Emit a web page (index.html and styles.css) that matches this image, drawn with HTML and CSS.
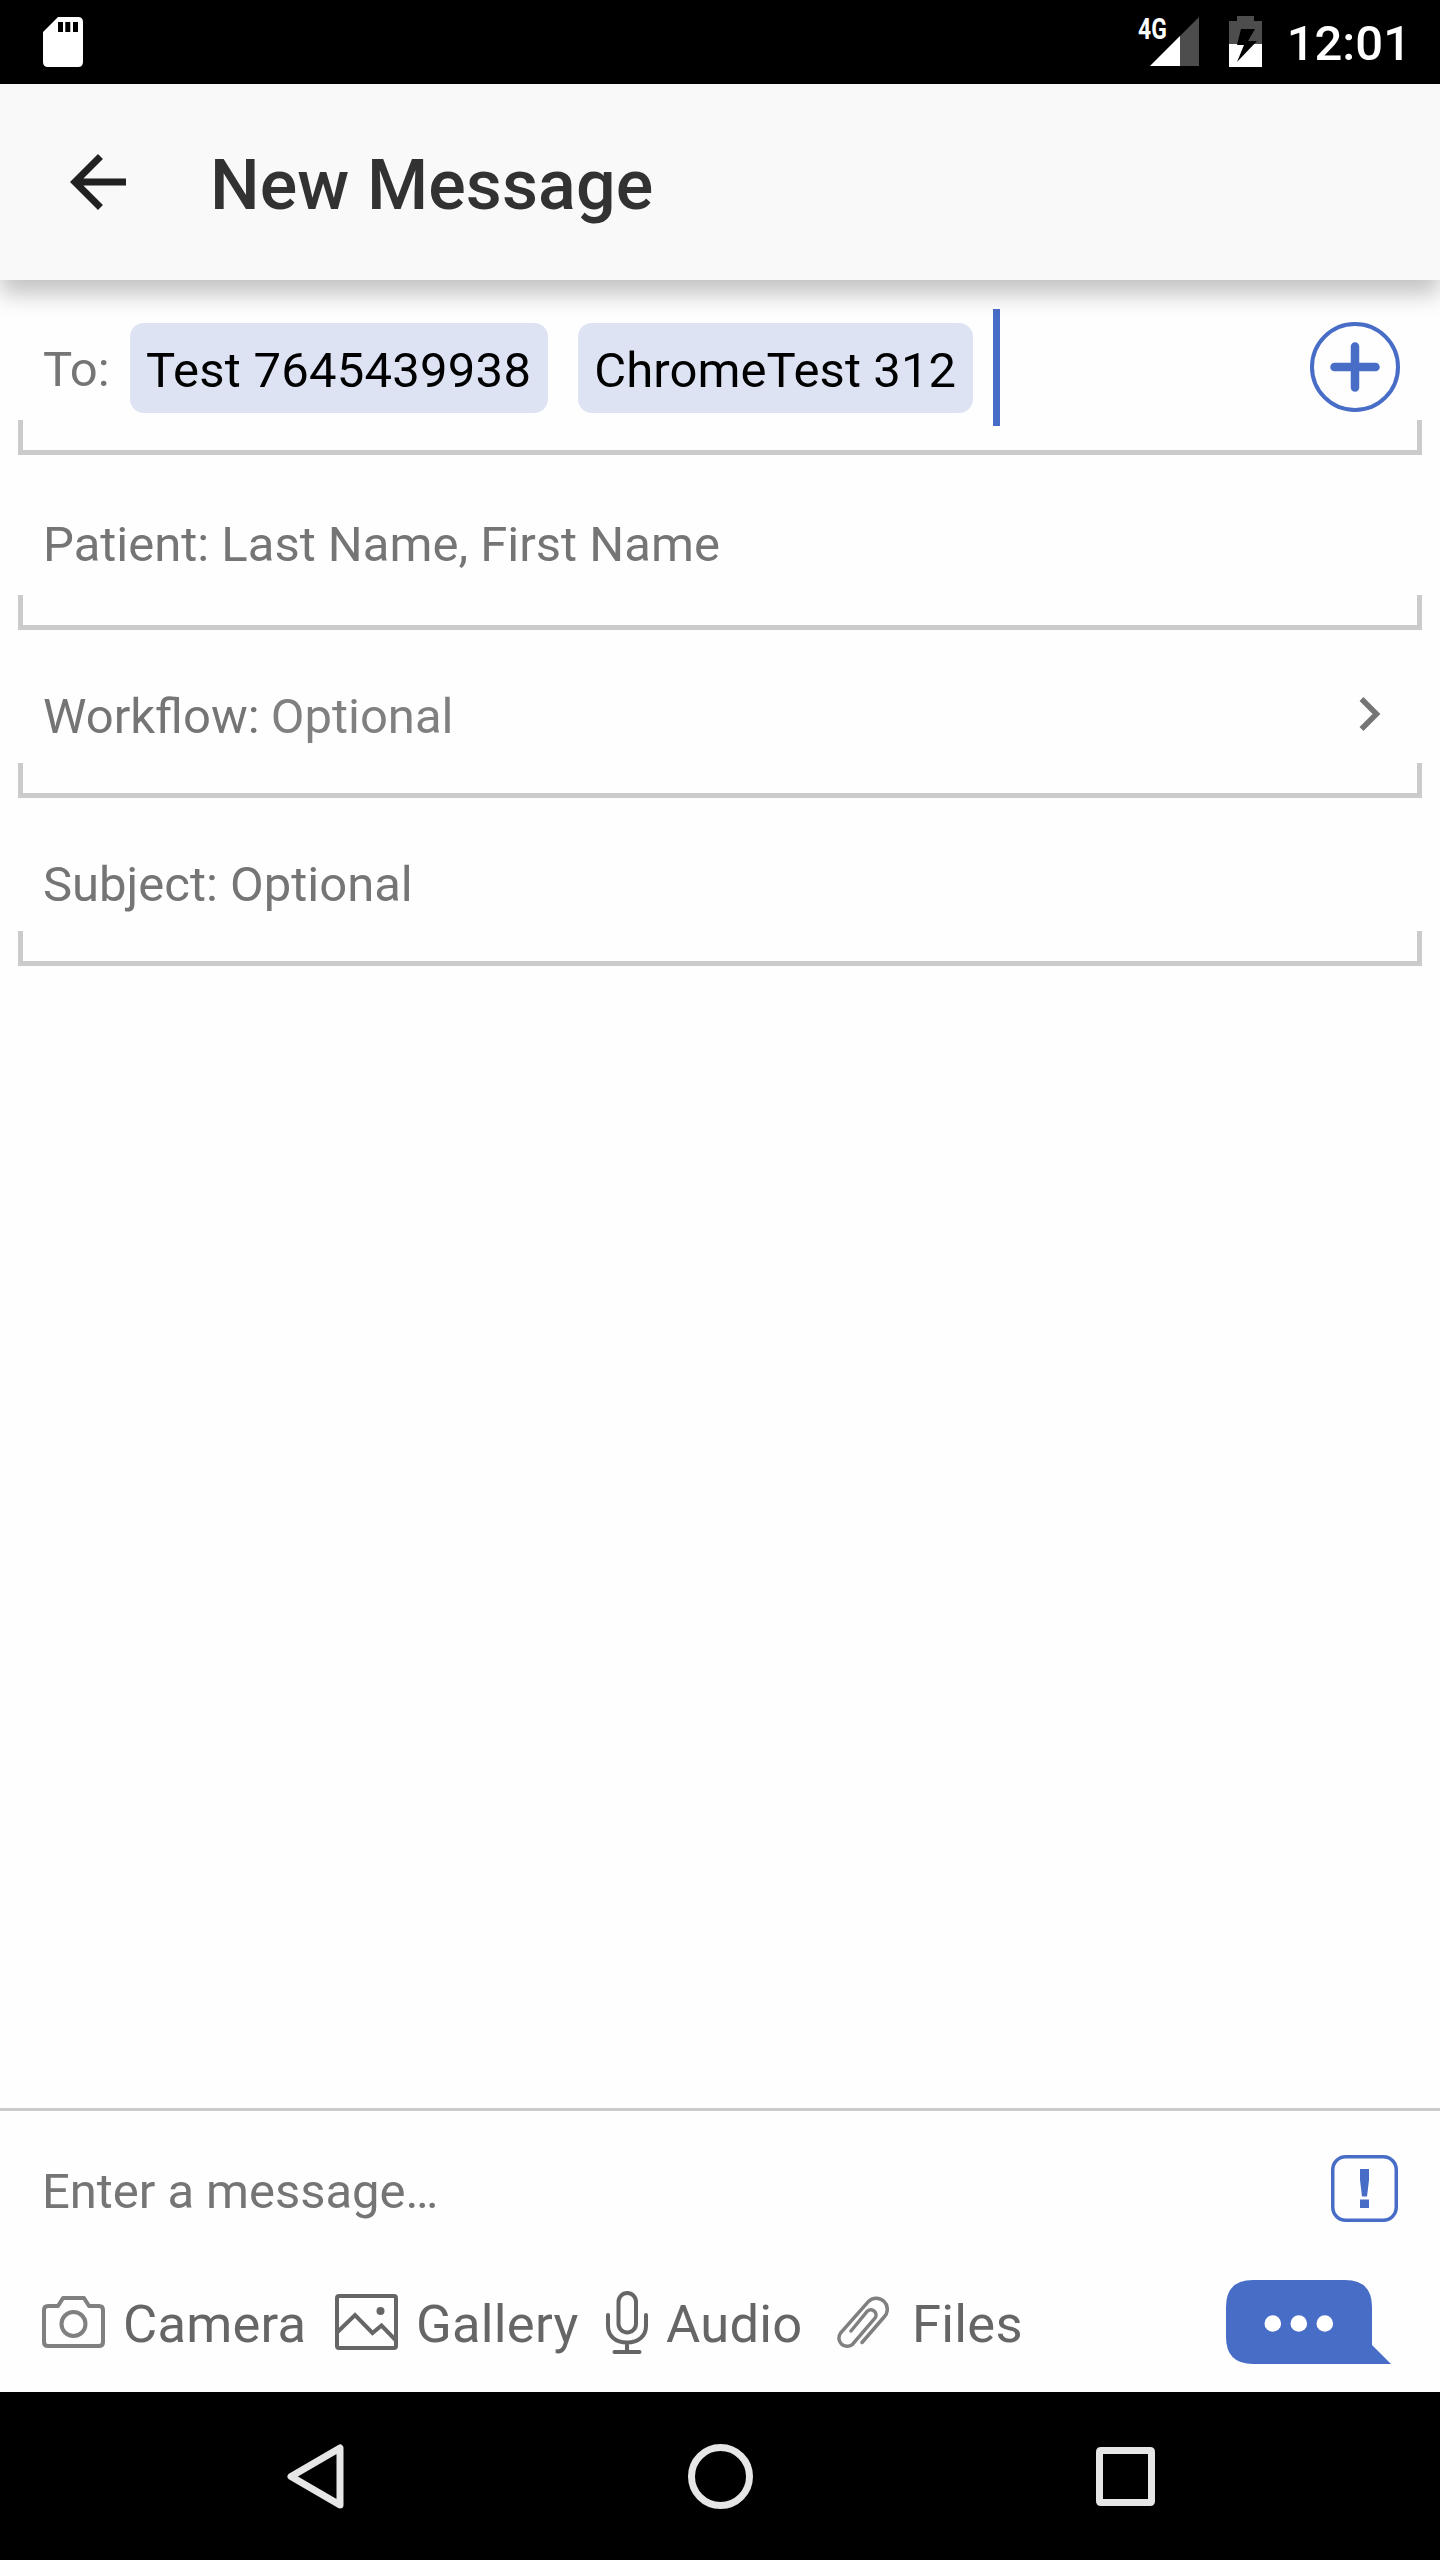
FILE: index.html
```html
<!DOCTYPE html>
<html lang="en">
<head>
<meta charset="utf-8">
<title>New Message</title>
<link rel="stylesheet" href="styles.css">
</head>
<body>
<div class="screen">
  <div class="status-bar">
    <svg class="sd-icon" width="40" height="50" viewBox="0 0 40 50"><path fill="#fff" fill-rule="evenodd" d="M15 0H35Q40 0 40 5V45Q40 50 35 50H5Q0 50 0 45V15ZM15 5V15H20V5ZM22.300 5V15H27.300V5ZM30 5V15H35V5Z"/></svg>
    <div class="status-right">
      <span class="network">4G</span>
      <svg class="signal-icon" width="49" height="49" viewBox="0 0 49 49"><path fill="#4d4d4d" d="M49 0V49H0Z"/><path fill="#fff" d="M30 19V49H0Z"/></svg>
      <svg class="battery-icon" width="33" height="51" viewBox="0 0 33 51"><path fill="#4d4d4d" d="M8 0H25V5H33V28H0V5H8Z"/><path fill="#fff" d="M0 28H33V51H0Z"/><path fill="#000" d="M12 13H26L19 25H28L8 46L15 29H8Z"/></svg>
      <span class="clock">12:01</span>
    </div>
  </div>

  <header class="app-bar">
    <svg class="back-icon" width="56" height="56" viewBox="0 0 56 56"><path fill="#212121" d="M56 24.500H13.400L32.960 4.930L28 0L0 28L28 56L32.930 51.070L13.400 31.500H56Z"/></svg>
    <h1 class="title">New Message</h1>
  </header>

  <main class="form">
    <div class="field field-to">
      <div class="field-row">
        <span class="label">To:</span>
        <span class="chip">Test 7645439938</span>
        <span class="chip chip-tight">ChromeTest 312</span>
        <span class="caret"></span>
        <svg class="add-icon" width="92" height="92" viewBox="0 0 92 92" fill="none" stroke="#486dc7"><circle cx="46" cy="46" r="43" stroke-width="4"/><path stroke-width="8.500" stroke-linecap="round" d="M46 25.500V66.500M25.500 46H66.500"/></svg>
      </div>
      <div class="bracket"></div>
    </div>
    <div class="field field-patient">
      <div class="field-row"><span class="label">Patient: Last Name, First Name</span></div>
      <div class="bracket"></div>
    </div>
    <div class="field field-workflow">
      <div class="field-row">
        <span class="label">Workflow: <span class="optional">Optional</span></span>
        <svg class="chevron" width="22" height="36" viewBox="0 0 22 36" fill="none" stroke="#757575" stroke-width="5.500"><path d="M2.500 3L17.500 18L2.500 33"/></svg>
      </div>
      <div class="bracket"></div>
    </div>
    <div class="field field-subject">
      <div class="field-row"><span class="label">Subject: Optional</span></div>
      <div class="bracket"></div>
    </div>
  </main>

  <section class="composer">
    <div class="message-row">
      <span class="label">Enter a message…</span>
      <svg class="urgent" width="67" height="67" viewBox="0 0 67 67"><rect x="1.750" y="1.750" width="63.500" height="63.500" rx="13" fill="none" stroke="#486dc7" stroke-width="3.500"/><path fill="#486dc7" d="M29 14H38V25L36 41.500H31L29 25ZM29 44.500H38V53H29Z"/></svg>
    </div>
    <div class="actions">
      <div class="action camera">
        <svg width="63" height="52" viewBox="0 0 63 52" fill="none" stroke="#808080" stroke-width="4"><path stroke-linejoin="round" d="M6 10H16L21 2H42L47 10H57Q61 10 61 14V46Q61 50 57 50H6Q2 50 2 46V14Q2 10 6 10Z"/><circle cx="31.500" cy="28" r="12"/></svg>
        <span>Camera</span>
      </div>
      <div class="action gallery">
        <svg width="63" height="56" viewBox="0 0 63 56" fill="none" stroke="#666" stroke-width="4"><rect x="2" y="2" width="59" height="52" rx="2"/><path d="M2 38.500L20 21L37.500 39L46.500 31.500L61 46.500"/><circle cx="45.500" cy="17" r="4" fill="#666" stroke="none"/></svg>
        <span>Gallery</span>
      </div>
      <div class="action audio">
        <svg width="42" height="63" viewBox="0 0 42 63" fill="none" stroke="#666" stroke-width="4" stroke-linecap="round"><rect x="12.500" y="2" width="17.500" height="39.500" rx="8.750"/><path d="M2 24V35C2 45 9.500 51.500 21 51.500S40 45 40 35V24M21 52V61M8.500 61H33.500"/></svg>
        <span>Audio</span>
      </div>
      <div class="action files">
        <svg width="53" height="53" viewBox="0 0 53 53" fill="none" stroke="#808080" stroke-width="3.500" stroke-linecap="round"><path d="M26 46.500L48.300 20.800A10.900 10.900 0 0 0 32.300 5.600L4.500 37.200A8.300 8.300 0 0 0 16.200 48.700L39.200 21.800A5.200 5.200 0 0 0 31.500 15L15 35"/></svg>
        <span>Files</span>
      </div>
      <svg class="send" width="165" height="84" viewBox="0 0 165 84"><path fill="#486dc7" d="M27 0H119Q146 0 146 27V65L165 84H27Q0 84 0 57V27Q0 0 27 0Z"/><g fill="#fff"><circle cx="46.800" cy="43.500" r="8.300"/><circle cx="72.800" cy="43.500" r="8.300"/><circle cx="98.800" cy="43.500" r="8.300"/></g></svg>
    </div>
  </section>

  <nav class="nav-bar">
    <svg width="57" height="65" viewBox="0 0 57 65"><path fill="none" stroke="#e6e6e6" stroke-width="7" stroke-linejoin="round" d="M4 32.500L53 4V61Z"/></svg>
    <svg width="65" height="65" viewBox="0 0 65 65"><circle cx="32.500" cy="32.500" r="29" fill="none" stroke="#e6e6e6" stroke-width="7"/></svg>
    <svg width="59" height="59" viewBox="0 0 59 59"><path fill="#e6e6e6" fill-rule="evenodd" d="M5 0H54Q59 0 59 5V54Q59 59 54 59H5Q0 59 0 54V5Q0 0 5 0ZM7 7V52H52V7Z"/></svg>
  </nav>
</div>
</body>
</html>
```

FILE: styles.css
```css
* { box-sizing: border-box; }

body {
  margin: 0;
  font-family: Roboto, "Liberation Sans", sans-serif;
  font-size: 49px;
  color: #757575;
  background: #fefefe;
}

svg { display: block; flex: none; }
span { white-space: nowrap; }

.screen {
  display: flex;
  flex-direction: column;
  width: 1440px;
  height: 2560px;
}

.status-bar {
  display: flex;
  justify-content: space-between;
  align-items: flex-start;
  height: 84px;
  padding: 0 29px 0 43px;
  background: #000;
  color: #fff;
}
.sd-icon { margin-top: 17px; }
.status-right { display: flex; align-items: flex-start; }
.network {
  width: 30px;
  margin: 11px -18px 0 0;
  font-size: 29px;
  font-weight: 700;
  line-height: 36px;
  transform: scaleX(.79);
  transform-origin: left;
}
.signal-icon { margin-top: 17px; }
.battery-icon { margin: 16px 25px 0 30px; }
.clock {
  font-weight: 500;
  line-height: 60px;
  margin-top: 14px;
}

.app-bar {
  position: relative;
  z-index: 1;
  display: flex;
  align-items: center;
  height: 196px;
  padding-left: 70px;
  background: #f9f9f9;
  box-shadow: 0 14px 22px rgba(0, 0, 0, .235);
}
.title {
  margin: 6px 0 0 84px;
  font-size: 70px;
  font-weight: 500;
  line-height: 84px;
  letter-spacing: .1px;
  color: #323232;
}

.form { flex: 1; padding: 0 18px; }
.field {
  display: flex;
  flex-direction: column;
  justify-content: space-between;
  height: 168px;
}
.field-to, .field-patient { height: 175px; }
.field-row {
  display: flex;
  align-items: center;
  height: 60px;
  margin-top: 57px;
  padding: 0 21px 0 25px;
}
.field-patient .field-row { margin-top: 60px; }
.field-to .field-row { height: 117px; margin-top: 29px; margin-bottom: -6px; }
.field-to .label { width: 87px; margin-top: 4px; }
.bracket {
  height: 35px;
  border: 5px solid #cbcbcb;
  border-top: 0;
}
.label { line-height: 60px; }
.optional { margin-left: -1px; color: #808080; }
.chip {
  height: 90px;
  margin-right: 30px;
  padding: 5px 17px 0 16px;
  border-radius: 14px;
  background: #dee3f4;
  color: #000;
  line-height: 86px;
  letter-spacing: .23px;
}
.chip-tight { letter-spacing: .08px; }
.caret {
  width: 7px;
  height: 117px;
  margin-left: -10px;
  background: #486dc7;
}
.add-icon { margin: -1px 0 0 auto; }
.chevron { margin: -7px 20px 0 auto; }

.composer {
  display: flex;
  flex-direction: column;
  height: 284px;
  padding: 0 42px;
  border-top: 3px solid #cbcbcb;
}
.message-row {
  display: flex;
  justify-content: space-between;
  align-items: flex-start;
  height: 111px;
  margin-top: 44px;
}
.message-row .label { margin-top: 7px; letter-spacing: -.05px; }
.actions {
  display: flex;
  align-items: center;
  height: 84px;
  margin-top: 14px;
  color: #666;
  font-size: 52.5px;
}
.action { display: flex; align-items: center; }
.action span { line-height: 64px; margin-top: 3px; letter-spacing: .25px; }
.camera { width: 293px; gap: 18px; }
.gallery { width: 271px; gap: 18px; }
.audio { width: 230px; gap: 18px; }
.files { gap: 23px; }
.send { margin-left: auto; margin-right: 7px; }

.nav-bar {
  display: flex;
  justify-content: space-between;
  align-items: center;
  height: 168px;
  padding: 1px 285px 0 287px;
  background: #000;
}
```
